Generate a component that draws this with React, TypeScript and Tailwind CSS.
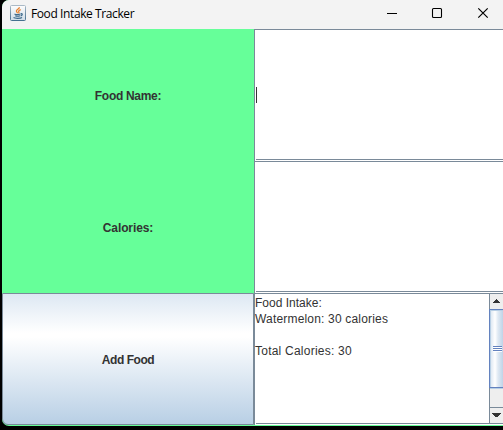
import React from "react";

function JavaIcon() {
  return (
    <svg width="16" height="16" viewBox="0 0 16 16" fill="none" className="mb-[3px] shrink-0">
      <defs>
        <linearGradient id="tile" x1="0" y1="0" x2="0" y2="1">
          <stop offset="0" stopColor="#fdfdfd" />
          <stop offset="1" stopColor="#cfdde8" />
        </linearGradient>
        <linearGradient id="edge" x1="0" y1="0" x2="0" y2="1">
          <stop offset="0" stopColor="#a9b9c6" />
          <stop offset="1" stopColor="#46708f" />
        </linearGradient>
      </defs>
      <rect x="0.5" y="0.5" width="15" height="15" rx="1" fill="url(#tile)" stroke="url(#edge)" />
      <path d="M9.4 2.2C9.6 4 6 4.500 6.400 6.200C6.600 7 7.500 7.300 7.500 8.300M10.700 4.600C8.700 5.400 8.200 6.200 8.900 7.100C9.200 7.600 8.900 8 8.500 8.400" stroke="#e8812e" strokeWidth="1.300" />
      <path d="M4.500 9C5.500 9.600 9 9.500 10.500 9M5.200 10.800C6.500 11.300 9 11.200 10 10.800M10.800 8.700C12.900 8.200 12.600 10.300 10.700 10.800M3.500 12.600C5 13.600 10.500 13.500 12 12.500" stroke="#3f6b8c" strokeWidth="1.200" />
    </svg>
  );
}

function TitleBar() {
  return (
    <header className="flex h-[29px] shrink-0 items-center bg-[#f3f3f3] pl-2">
      <JavaIcon />
      <h1 className="ml-[5px] flex-1 whitespace-nowrap pb-px font-['Open_Sans','Noto_Sans',sans-serif] text-[12px] leading-4 tracking-[-0.4px] text-black">
        Food Intake Tracker
      </h1>
      <svg width="117" height="29" viewBox="0 0 117 29" fill="none" stroke="#000" className="shrink-0">
        <path d="M1 13.500H11" shapeRendering="crispEdges" />
        <rect x="46.500" y="8.500" width="9" height="9" rx="1" strokeWidth="1.100" />
        <path d="M92.300 8.300L101.700 17.700M101.700 8.300L92.300 17.700" strokeWidth="1.200" />
      </svg>
    </header>
  );
}

function Field({ caret = false }: { caret?: boolean }) {
  return (
    <div className="flex h-[132px] flex-col border-l border-t border-[#7a8a99] bg-white">
      <div className="flex h-[129px] items-center pl-px">
        {caret && <span className="h-4 w-px bg-[#333]" />}
      </div>
      <div className="ml-px h-px bg-[#7a8a99]" />
    </div>
  );
}

function ScrollBar() {
  return (
    <div className="flex w-[14px] shrink-0 flex-col border-l border-[#7a8a99] bg-[#eee]">
      <div className="flex h-[15px] shrink-0 pl-[2px] pt-[5px]">
        <svg width="10" height="5" viewBox="0 0 10 5" fill="#333" shapeRendering="crispEdges">
          <path d="M4 0h1v1h1v1h1v1h1v1H1V3h1V2h1V1h1z" />
        </svg>
      </div>
      <div className="-ml-px flex h-[79px] shrink-0 flex-col justify-center border-y border-l border-[#6382bf] bg-[linear-gradient(90deg,#b8cfe5_0px,#b8cfe5_1px,#dfe9f3_1px,#fff_5px,#dfe9f3_8px,#b8cfe5_14px)] pl-[3px] pr-px shadow-[inset_0_1px_#b8cfe5]">
        <div className="h-[6px] bg-[repeating-linear-gradient(180deg,#6382bf_0px,#6382bf_1px,#fff_1px,#fff_2px)]" />
      </div>
      <div className="h-[19px] border-t border-[#b8cfe5]" />
      <div className="flex h-[17px] shrink-0 border-y border-[#7a8a99] pl-[2px] pt-[5px]">
        <svg width="10" height="5" viewBox="0 0 10 5" fill="#333" shapeRendering="crispEdges">
          <path d="M0 0h9v1H8v1H7v1H6v1H3V3H2V2H1V1H0z" />
        </svg>
      </div>
    </div>
  );
}

export default function App() {
  return (
    <main className="h-[430px] w-[503px] overflow-hidden bg-black pl-[2px] font-['Liberation_Sans',Arial,sans-serif] text-[12px] text-[#333]">
      <div className="flex h-[426px] w-[501px] flex-col overflow-hidden rounded-bl-[7px] rounded-tl-[7px] bg-[#66ff99]">
        <TitleBar />
        <div className="grid h-[396px] grid-cols-[252px_249px] grid-rows-[132px_132px_132px]">
          <label className="flex items-center justify-center pt-[2px] font-bold tracking-[-0.3px]">
            Food Name:
          </label>
          <Field caret />
          <label className="flex items-center justify-center pt-[2px] font-bold tracking-[-0.1px]">
            Calories:
          </label>
          <Field />
          <button className="rounded-bl-[6px] border border-[#7a8a99] bg-[linear-gradient(180deg,#dde8f3_0%,#fff_30%,#fff_33%,#b8cfe5_100%)] pt-[2px] text-center font-bold tracking-[-0.45px]">
            Add Food
          </button>
          <div className="flex flex-col border-l border-t border-[#7a8a99] bg-white">
            <div className="flex h-[130px]">
              <div className="flex-1 whitespace-pre pt-px leading-4">
                <p>Food Intake:</p>
                <p className="tracking-[0.18px]">Watermelon: 30 calories</p>
                <p className="mt-4 tracking-[0.23px]">Total Calories: 30</p>
              </div>
              <ScrollBar />
            </div>
            <div className="-mt-px ml-px h-px bg-[#7a8a99]" />
          </div>
        </div>
      </div>
    </main>
  );
}
